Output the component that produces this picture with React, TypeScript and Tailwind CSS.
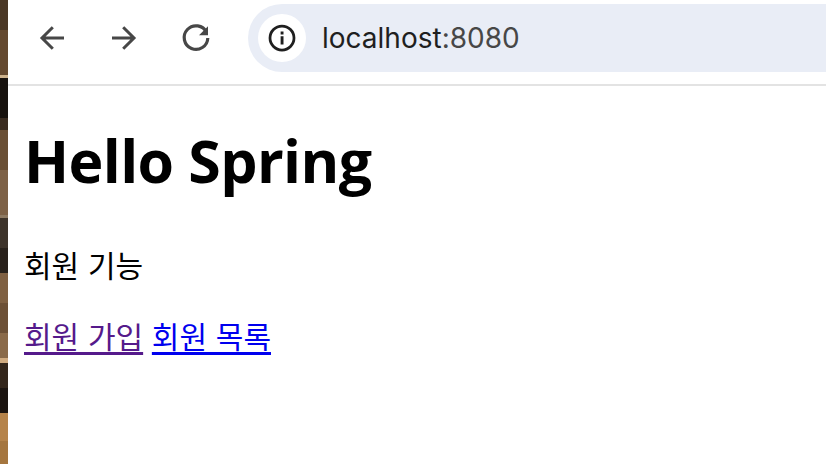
const strip = [
  ["#4a3826", 30],
  ["#64492f", 45],
  ["#cdb28c", 3],
  ["#17120e", 40],
  ["#3a2c20", 12],
  ["#6a4f35", 40],
  ["#7d6146", 45],
  ["#8e7a62", 3],
  ["#3d332a", 30],
  ["#28211b", 25],
  ["#7f6042", 30],
  ["#6c5036", 30],
  ["#8a6a49", 25],
  ["#d0ab80", 5],
  ["#33261b", 25],
  ["#1b1410", 25],
  ["#b5834a", 28],
  ["#a5763f", 23],
];

const BrowserBar = () => {
  return (
    <div className="h-[86px] shrink-0 pt-[4px] border-b-2 border-[#e3e3e3] bg-white">
      <div className="h-[68px] flex items-center">
        <div className="flex items-center pl-[20px] gap-[24px]">
          <svg width="48" height="48" viewBox="0 0 24 24" className="w-[48px] h-[48px]">
            <path d="M18 12H7.2M12.4 6.6 7 12l5.4 5.4" fill="none" stroke="#474747" strokeWidth="1.5" />
          </svg>
          <svg width="48" height="48" viewBox="0 0 24 24" className="w-[48px] h-[48px]">
            <path d="M6 12h10.8M11.6 6.6 17 12l-5.4 5.4" fill="none" stroke="#474747" strokeWidth="1.5" />
          </svg>
          <svg width="48" height="48" viewBox="0 0 24 24" className="w-[48px] h-[48px]">
            <path d="M17.3 9.2A5.9 5.9 0 1 0 17.9 12" fill="none" stroke="#474747" strokeWidth="1.6" />
            <path d="M18 6.1v4.5h-4.5z" fill="#474747" />
          </svg>
        </div>
        <div className="ml-[28px] flex-1 h-[68px] rounded-l-full bg-[#e9edf6] flex items-center pl-[10px]">
          <div className="w-[48px] h-[48px] rounded-full bg-white flex items-center justify-center">
            <svg width="30" height="30" viewBox="0 0 24 24">
              <circle cx="12" cy="12" r="9.6" fill="none" stroke="#1f1f1f" strokeWidth="2.2" />
              <rect x="10.9" y="10.6" width="2.3" height="6.6" fill="#1f1f1f" />
              <rect x="10.9" y="6.8" width="2.3" height="2.4" fill="#1f1f1f" />
            </svg>
          </div>
          <span className="ml-[16px] text-[28px] font-['Inter',sans-serif] text-[#1f1f1f]">
            localhost<span className="text-[#474747]">:8080</span>
          </span>
        </div>
      </div>
    </div>
  );
};

export default function App() {
  return (
    <div className="w-[826px] h-[464px] flex overflow-hidden bg-white text-black">
      <div className="w-[8px] shrink-0 flex flex-col">
        {strip.map(([color, height], index) => (
          <div key={index} className="w-full" style={{ backgroundColor: color as string, height: height as number }} />
        ))}
      </div>
      <div className="flex-1 flex flex-col min-w-0">
        <BrowserBar />
        <main className="pl-[16px] font-['Noto_Sans_CJK_KR',sans-serif] text-[30px] leading-[40px] [word-spacing:2px]">
          <h1 className="mt-[36px] font-['Open_Sans',sans-serif] text-[59px] leading-[76px] font-bold tracking-[-0.6px] [word-spacing:0]">Hello Spring</h1>
          <p className="mt-[46px]">회원 기능</p>
          <p className="mt-[31px]">
            <a href="#signup" className="text-[#551a8b] underline decoration-[3px] underline-offset-[4px] [text-decoration-skip-ink:none]">회원 가입</a>{" "}
            <a href="#list" className="text-[#0000ee] underline decoration-[3px] underline-offset-[4px] [text-decoration-skip-ink:none]">회원 목록</a>
          </p>
        </main>
      </div>
    </div>
  );
}
